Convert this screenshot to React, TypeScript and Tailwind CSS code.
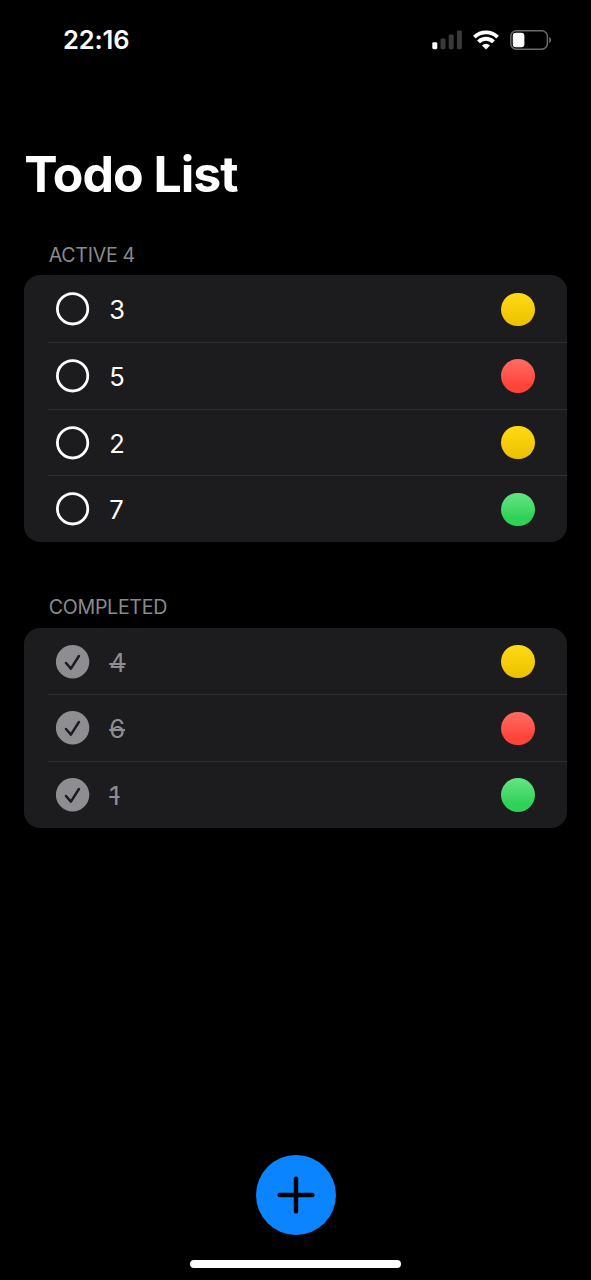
type Priority = "medium" | "high" | "low";

interface Todo {
  title: string;
  priority: Priority;
}

const activeTodos: Todo[] = [
  { title: "3", priority: "medium" },
  { title: "5", priority: "high" },
  { title: "2", priority: "medium" },
  { title: "7", priority: "low" },
];

const completedTodos: Todo[] = [
  { title: "4", priority: "medium" },
  { title: "6", priority: "high" },
  { title: "1", priority: "low" },
];

const priorityFill: Record<Priority, string> = {
  medium: "bg-linear-to-b from-[#ffdb12] to-[#ebc000]",
  high: "bg-linear-to-b from-[#ff6b63] via-[#ff453a] via-75% to-[#ff453a]",
  low: "bg-linear-to-b from-[#62e584] via-[#30d158] via-75% to-[#30d158]",
};

function StatusBar() {
  return (
    <header className="flex h-[79px] items-center justify-between pr-[39.5px] pl-[63px]">
      <span className="text-[25.5px] leading-none font-semibold tracking-[-0.1px]">22:16</span>
      <div className="flex items-center">
        <svg width="30" height="20" viewBox="0 0 30 20" aria-label="Signal">
          <rect x="0.3" y="12.2" width="5" height="7" rx="1.4" fill="#fff" />
          <rect x="8.5" y="8.4" width="5" height="10.8" rx="1.4" fill="#3a3a3a" />
          <rect x="16.7" y="4.4" width="5" height="14.8" rx="1.4" fill="#3a3a3a" />
          <rect x="24.9" y="0.4" width="5" height="18.8" rx="1.4" fill="#3a3a3a" />
        </svg>
        <svg className="ml-[11px]" width="26" height="20" viewBox="0 0 26 20" fill="none" stroke="#fff" strokeWidth="3.9" aria-label="Wi-Fi">
          <path d="M1.4 7.1a16.7 16.7 0 0 1 23.2 0" />
          <path d="M5.5 11.8a10.6 10.6 0 0 1 15 0" />
          <path d="M13 19.6 9 15.4a5.8 5.8 0 0 1 8 0Z" fill="#fff" stroke="none" />
        </svg>
        <svg className="ml-[11px]" width="42" height="20" viewBox="0 0 42 20" aria-label="Battery">
          <rect x="0.8" y="0.8" width="36.6" height="18.4" rx="5.6" fill="none" stroke="#6a6a6a" strokeWidth="1.5" />
          <rect x="2.8" y="2.8" width="11.6" height="14.4" rx="3" fill="#fff" />
          <path d="M39.2 7c2.6 1 2.6 5 0 6Z" fill="#6a6a6a" />
        </svg>
      </div>
    </header>
  );
}

function StatusIcon({ done }: { done: boolean }) {
  return (
    <svg className="shrink-0" width="34" height="34" viewBox="0 0 34 34" fill="none">
      {done ? (
        <>
          <circle cx="16.6" cy="16.8" r="16.7" fill="#8e8e92" />
          <path d="M10 18 14.9 23.6 22.9 11" stroke="#1c1c1e" strokeWidth="2.5" strokeLinecap="round" strokeLinejoin="round" />
        </>
      ) : (
        <circle cx="16.6" cy="16.8" r="15.2" stroke="#fff" strokeWidth="2.8" />
      )}
    </svg>
  );
}

function TodoRow({ todo, done, first }: { todo: Todo; done: boolean; first: boolean }) {
  return (
    <li className="pl-[24px]">
      <div className={`flex h-[66.7px] items-center border-t pr-[32px] pl-[7.5px] ${first ? "border-transparent" : "border-[#303033]"}`}>
        <StatusIcon done={done} />
        <span
          className={`ml-[19.4px] pt-[1.6px] text-[25.5px] leading-none ${
            done ? "text-[#8e8e92] line-through decoration-[1.6px]" : "text-white"
          }`}
        >
          {todo.title}
        </span>
        <span className={`ml-auto size-[33.4px] rounded-full ${priorityFill[todo.priority]}`} />
      </div>
    </li>
  );
}

function TodoSection({ title, todos, done = false }: { title: string; todos: Todo[]; done?: boolean }) {
  return (
    <section>
      <h2 className="pl-[24.5px] text-[19.6px] leading-[24px] font-normal tracking-[-0.3px] text-[#8a8a8e]">{title}</h2>
      <ul className="mt-[8.4px] overflow-hidden rounded-[16px] bg-[#1c1c1e]">
        {todos.map((todo, i) => (
          <TodoRow key={todo.title} todo={todo} done={done} first={i === 0} />
        ))}
      </ul>
    </section>
  );
}

export default function App() {
  return (
    <div className="flex h-[1280px] w-[591px] flex-col overflow-hidden bg-black font-['Inter','Liberation_Sans',sans-serif] text-white">
      <StatusBar />
      <main className="flex flex-1 flex-col px-[24.3px]">
        <h1 className="mt-[65px] text-[50px] leading-[60px] font-bold tracking-[-1px]">Todo List</h1>
        <div className="mt-[39px] flex flex-col gap-[53.2px]">
          <TodoSection title="ACTIVE 4" todos={activeTodos} />
          <TodoSection title="COMPLETED" todos={completedTodos} done />
        </div>
      </main>
      <footer className="flex flex-col items-center pb-[12px]">
        <button className="flex size-[80px] items-center justify-center rounded-full bg-[#0a84ff]" aria-label="Add todo">
          <svg width="38" height="38" viewBox="0 0 38 38" stroke="#000" strokeWidth="4.4" strokeLinecap="round">
            <path d="M19 2.6v32.8M2.6 19h32.8" />
          </svg>
        </button>
        <div className="mt-[25px] h-[8px] w-[211px] rounded-full bg-white" />
      </footer>
    </div>
  );
}
